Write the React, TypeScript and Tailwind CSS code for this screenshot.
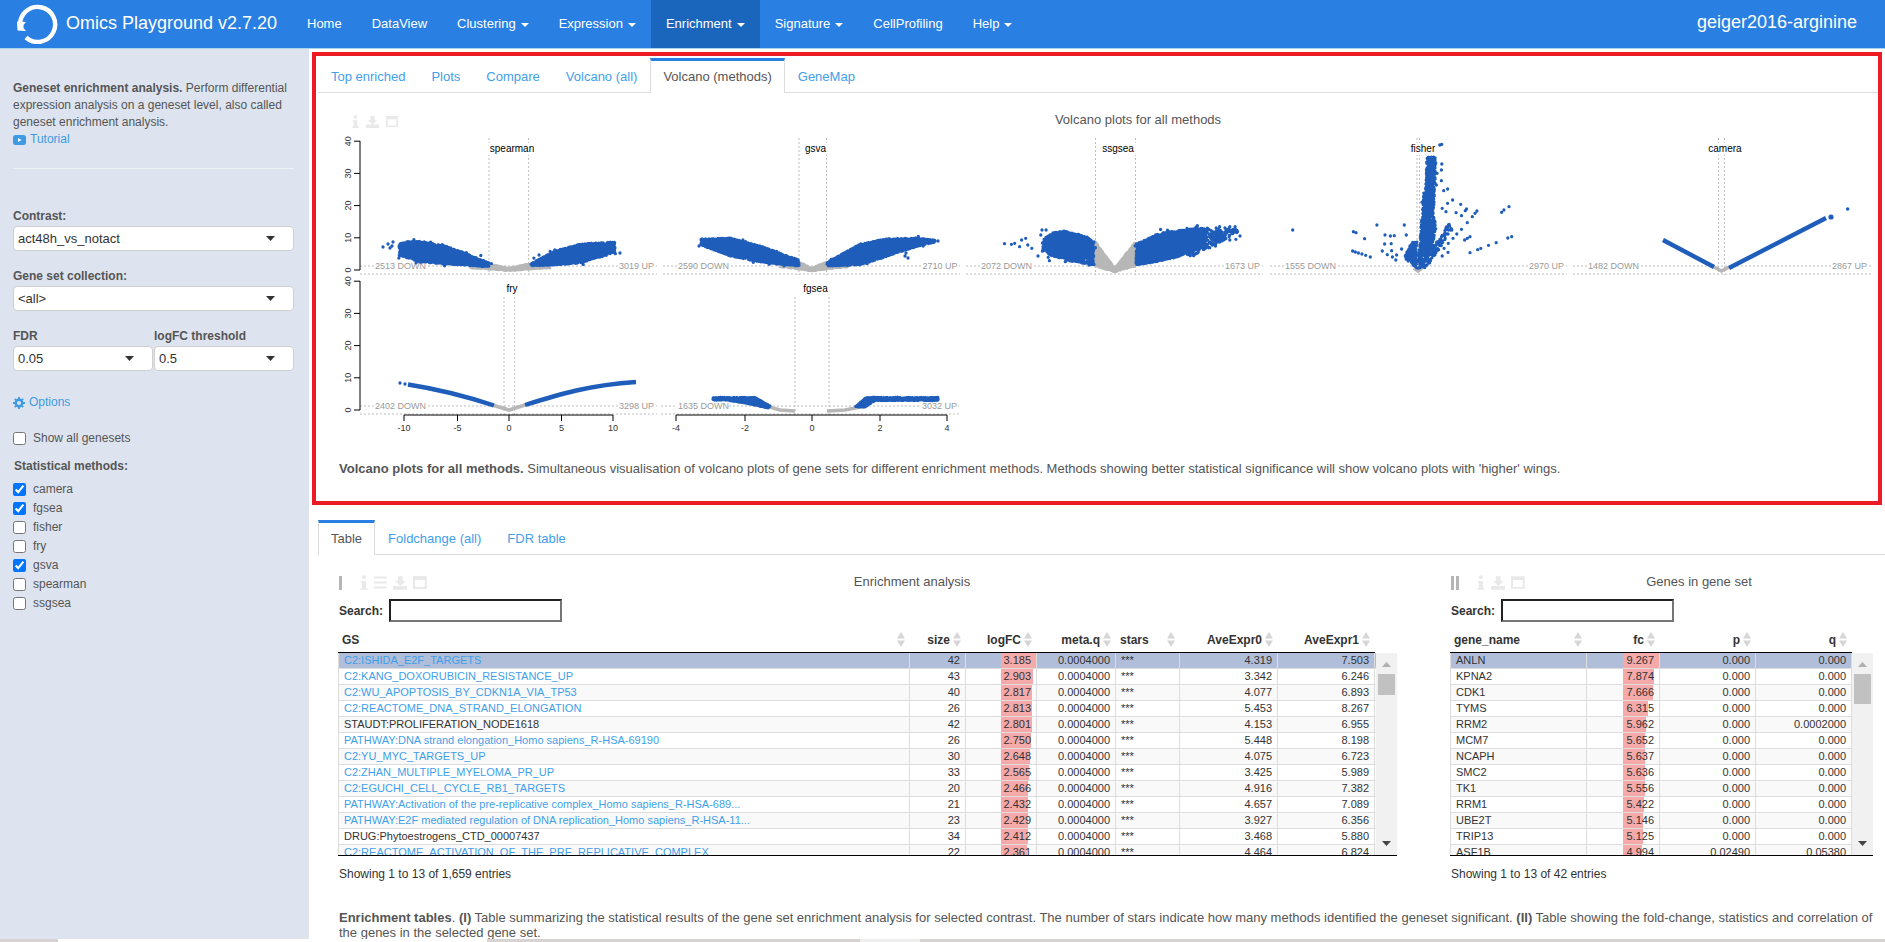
import React from "react";

type Pt = [number, number];

function rng(seed: number) {
  let a = seed;
  return () => {
    a |= 0;
    a = (a + 0x6d2b79f5) | 0;
    let t = Math.imul(a ^ (a >>> 15), 1 | a);
    t = (t + Math.imul(t ^ (t >>> 7), 61 | t)) ^ t;
    return ((t ^ (t >>> 14)) >>> 0) / 4294967296;
  };
}

function inside(p: Pt, poly: Pt[]) {
  let c = false;
  for (let i = 0, j = poly.length - 1; i < poly.length; j = i++) {
    const [xi, yi] = poly[i];
    const [xj, yj] = poly[j];
    if (yi > p[1] !== yj > p[1] && p[0] < ((xj - xi) * (p[1] - yi)) / (yj - yi) + xi) c = !c;
  }
  return c;
}

function area(poly: Pt[]) {
  let s = 0;
  for (let i = 0, j = poly.length - 1; i < poly.length; j = i++) s += poly[j][0] * poly[i][1] - poly[i][0] * poly[j][1];
  return Math.abs(s / 2);
}

function cloud(poly: Pt[], density: number, seed: number, rough = 0) {
  const r = rng(seed);
  const xs = poly.map((p) => p[0]);
  const ys = poly.map((p) => p[1]);
  const x0 = Math.min(...xs);
  const x1 = Math.max(...xs);
  const y0 = Math.min(...ys);
  const y1 = Math.max(...ys);
  const n = Math.ceil(area(poly) * density);
  let d = "";
  let k = 0;
  let guard = 0;
  while (k < n && guard < n * 60) {
    guard++;
    const p: Pt = [x0 + r() * (x1 - x0), y0 + r() * (y1 - y0)];
    if (inside(p, poly)) {
      // a few points stray past the outline so the edge of a cloud is rough
      const stray = r() < 0.04 ? rough : 0;
      const qx = p[0] + (r() - 0.5) * stray;
      const qy = p[1] + (r() - 0.5) * stray;
      d += `M${qx.toFixed(1)} ${qy.toFixed(1)}h0`;
      k++;
    }
  }
  return d;
}

const dots = (pts: Pt[]) => pts.map((p) => `M${p[0]} ${p[1]}h0`).join("");
const z2 = (pts: Pt[]): Pt[] => pts.map(([x, y]) => [+(640 + x / 2.45).toFixed(1), +(y / 3).toFixed(1)]);
const z3 = (pts: Pt[]): Pt[] => pts.map(([x, y]) => [+(1280 + x / 2.59).toFixed(1), +(y / 3).toFixed(1)]);

const BLUE = "#1f5dba";
const GRAY = "#b7b7b7";

const blueD =
  // spearman
  cloud([[399, 244], [405, 242], [420, 241], [445, 246], [465, 253], [489, 263], [489, 267], [465, 265], [445, 264], [420, 262], [399, 255]], 1.6, 1, 7) +
  dots([[383, 247], [388, 244], [392, 246], [390, 248], [393, 242]]) +
  cloud([[530, 264], [555, 251], [580, 244], [615, 242], [615, 252], [580, 263], [555, 265], [530, 266]], 1.6, 2, 7) +
  dots([[620, 253], [539, 255]]) +
  // gsva
  cloud([[701, 239], [730, 238], [760, 246], [799, 260], [799, 266], [760, 262], [730, 256], [701, 245]], 1.6, 3, 5) +
  cloud([[826, 263], [860, 244], [885, 239], [915, 238], [935, 240], [935, 242], [915, 247], [885, 257], [860, 265], [826, 266]], 1.6, 4, 6) +
  dots([[905, 256], [908, 258], [906, 253], [699, 246], [938, 241]]) +
  // ssgsea
  cloud([[1042, 241], [1052, 233], [1064, 231], [1085, 236], [1094, 241], [1094, 265], [1070, 261], [1050, 255], [1042, 249]], 1, 5, 9) +
  cloud([[1136, 244], [1160, 233], [1190, 229], [1205, 228], [1205, 244], [1190, 254], [1160, 261], [1136, 265]], 1.2, 6, 9) +
  cloud([[1190, 240], [1205, 228], [1235, 227], [1238, 232], [1215, 245], [1190, 258]], 0.3, 7, 6) +
  dots(
    z2([[893, 731], [910, 733], [918, 730], [935, 720], [945, 715], [930, 740], [950, 735], [960, 745], [985, 690], [995, 690], [982, 705], [975, 768], [1000, 772], [1003, 782], [1042, 785], [1100, 795],
      [1420, 680], [1445, 680], [1458, 680], [1455, 690], [1470, 708], [1460, 718], [1445, 720], [1425, 708], [1410, 715], [1410, 738], [1390, 735], [1370, 745], [1345, 740], [1320, 750], [1300, 755], [1280, 765], [1260, 775], [1240, 785]])
  ) +
  // fisher
  cloud([[1427, 157], [1436, 157], [1435, 190], [1425, 190]], 0.75, 81, 3) +
  cloud([[1418, 270], [1420, 240], [1424, 190], [1435, 190], [1433, 215], [1436, 225], [1433, 245], [1425, 262]], 0.85, 8, 5) +
  cloud([[1420, 268], [1437, 240], [1450, 222], [1452, 228], [1440, 248], [1426, 268]], 0.3, 88) +
  cloud([[1417, 269], [1417, 241], [1412, 242], [1408, 250], [1404, 257], [1411, 264]], 0.6, 9, 3) +
  dots(
    z3([[419, 492], [418, 510], [418, 542], [407, 520], [405, 555], [424, 572], [434, 567], [447, 600], [434, 610], [420, 625], [430, 635], [468, 613], [483, 627], [480, 632], [456, 638], [470, 647], [510, 633], [505, 640], [498, 650], [593, 620], [580, 630], [574, 637], [485, 668], [470, 688], [445, 690], [432, 688], [600, 710], [590, 714], [492, 710], [485, 715], [478, 720], [560, 728], [540, 736], [520, 745], [512, 749], [492, 758], [435, 757], [420, 768], [458, 702], [448, 715], [436, 730], [425, 745],
      [33, 690], [190, 695], [197, 698], [219, 716], [251, 675], [322, 675], [272, 705], [286, 708], [296, 707], [327, 705], [271, 732], [288, 731], [289, 752], [265, 753], [278, 764], [291, 771], [300, 780], [302, 765], [188, 753], [195, 756], [203, 759], [212, 762], [222, 766], [234, 771], [315, 747]])
  ) +
  // fry dots
  dots([[400, 383], [405, 384]]) +
  // fgsea
  cloud([[713, 397.5], [755, 397.5], [770, 406], [768, 408], [745, 403], [725, 400], [713, 400]], 3, 10) +
  cloud([[855, 407], [862, 401], [866, 397.5], [938, 397.5], [938, 400.5], [875, 400.5], [865, 407]], 3, 11) +
  dots([[713, 399], [937, 399]]);

const grayD =
  cloud([[470, 265], [489, 264], [509, 268], [528, 264], [550, 266], [550, 268], [528, 269], [509, 271], [489, 269], [470, 268]], 2.5, 12) +
  cloud([[780, 265], [799, 262], [812, 268], [826, 262], [848, 265], [848, 267], [826, 269], [812, 271], [799, 269], [780, 267]], 2.5, 13) +
  cloud([[1095, 241], [1105, 255], [1115, 268], [1125, 255], [1135, 242], [1135, 266], [1115, 272], [1095, 266]], 3, 14);

const lines: { d: string; c: string }[] = [
  { d: "M1663 240L1714 267", c: BLUE },
  { d: "M1729 268L1826 218", c: BLUE },
  { d: "M1714 267L1721.5 271L1729 267", c: GRAY },
  { d: "M1414 268L1418 271L1422 268", c: GRAY },
  { d: "M408 384.5Q450 391 494 405.5", c: BLUE },
  { d: "M525 405C560 394 590 385 636 382", c: BLUE },
  { d: "M494 405.5L509 410L525 405", c: GRAY },
  { d: "M762 405L780 410L795 411", c: GRAY },
  { d: "M827 411L845 410L860 407", c: GRAY },
];

type Panel = { x0: number; x1: number; v1: number; v2: number; t: string; tx: number; dl: string; dx: number; ul: string; ux: number };
const row1: Panel[] = [
  { x0: 360, x1: 657, v1: 489, v2: 528.6, t: "spearman", tx: 512, dl: "2513 DOWN", dx: 375, ul: "3019 UP", ux: 654 },
  { x0: 663, x1: 960, v1: 799, v2: 826.5, t: "gsva", tx: 815.5, dl: "2590 DOWN", dx: 678, ul: "2710 UP", ux: 957.5 },
  { x0: 966, x1: 1263, v1: 1095.5, v2: 1135.5, t: "ssgsea", tx: 1118, dl: "2072 DOWN", dx: 981, ul: "1673 UP", ux: 1260 },
  { x0: 1270, x1: 1567, v1: 1417, v2: 1419.5, t: "fisher", tx: 1423, dl: "1555 DOWN", dx: 1285, ul: "2970 UP", ux: 1564 },
  { x0: 1573, x1: 1872, v1: 1718.6, v2: 1724.4, t: "camera", tx: 1725, dl: "1482 DOWN", dx: 1588, ul: "2867 UP", ux: 1867 },
];
const row2: Panel[] = [
  { x0: 360, x1: 657, v1: 504, v2: 514.6, t: "fry", tx: 512, dl: "2402 DOWN", dx: 375, ul: "3298 UP", ux: 654 },
  { x0: 661, x1: 960, v1: 795, v2: 829, t: "fgsea", tx: 815.5, dl: "1635 DOWN", dx: 678, ul: "3032 UP", ux: 957 },
];

function PanelMarks({ p, top, zero }: { p: Panel; top: number; zero: number }) {
  const dash = { stroke: "#bdbdbd", strokeWidth: 1, strokeDasharray: "2 2", fill: "none" };
  return (
    <g>
      <line x1={p.x0} x2={p.x1} y1={zero - 4} y2={zero - 4} {...dash} />
      <line x1={p.x0} x2={p.x1} y1={zero + 4} y2={zero + 4} {...dash} />
      <line x1={p.v1} x2={p.v1} y1={top} y2={zero + 5} {...dash} />
      <line x1={p.v2} x2={p.v2} y1={top} y2={zero + 5} {...dash} />
      <rect x={p.dx - 1} y={zero - 9} width={52} height={10} fill="#fff" />
      <text x={p.dx} y={zero - 1} fontSize={9} fill="#9a9a9a">{p.dl}</text>
      <rect x={p.ux - 36} y={zero - 9} width={37} height={10} fill="#fff" />
      <text x={p.ux} y={zero - 1} fontSize={9} fill="#9a9a9a" textAnchor="end">{p.ul}</text>
    </g>
  );
}

function YAxis({ zero }: { zero: number }) {
  return (
    <g>
      <path d={`M360 ${zero - 129}V${zero}`} stroke="#000" fill="none" />
      {[0, 10, 20, 30, 40].map((v, i) => {
        const y = zero - i * 32.2;
        return (
          <g key={v}>
            <line x1={354} x2={360} y1={y} y2={y} stroke="#000" />
            <text x={351} y={y} fontSize={9} fill="#333" textAnchor="middle" transform={`rotate(-90 351 ${y})`}>{v}</text>
          </g>
        );
      })}
    </g>
  );
}

function XAxis({ ticks }: { ticks: [number, string][] }) {
  return (
    <g>
      <path d={`M${ticks[0][0]} 415H${ticks[ticks.length - 1][0]}`} stroke="#000" fill="none" />
      {ticks.map(([x, l]) => (
        <g key={l}>
          <line x1={x} x2={x} y1={415} y2={421} stroke="#000" />
          <text x={x} y={431} fontSize={9} fill="#333" textAnchor="middle">{l}</text>
        </g>
      ))}
    </g>
  );
}

function VolcanoPlots() {
  return (
    <svg width={1560} height={308} viewBox="318 132 1560 308" className="block">
      <rect x={318} y={132} width={1560} height={308} fill="#fff" />
      {row1.map((p) => <PanelMarks key={p.t} p={p} top={138} zero={270} />)}
      {row2.map((p) => <PanelMarks key={p.t} p={p} top={297} zero={410} />)}
      <YAxis zero={270} />
      <YAxis zero={410} />
      <XAxis ticks={[[404, "-10"], [457.5, "-5"], [509, "0"], [561.5, "5"], [613, "10"]]} />
      <XAxis ticks={[[676, "-4"], [745, "-2"], [812, "0"], [880, "2"], [947, "4"]]} />
      <path d={grayD} stroke={GRAY} strokeWidth={3} strokeLinecap="round" fill="none" />
      {lines.filter((l) => l.c === GRAY).map((l, i) => <path key={i} d={l.d} stroke={l.c} strokeWidth={3.6} fill="none" />)}
      <path d={blueD} stroke={BLUE} strokeWidth={3.3} strokeLinecap="round" fill="none" />
      {lines.filter((l) => l.c === BLUE).map((l, i) => <path key={i} d={l.d} stroke={l.c} strokeWidth={4.4} strokeLinejoin="round" fill="none" />)}
      <circle cx={1831} cy={217} r={2.6} fill={BLUE} />
      <circle cx={1847.6} cy={209} r={1.8} fill={BLUE} />
      {[...row1.map((p) => ({ p, y: 152 })), ...row2.map((p) => ({ p, y: 292 }))].map(({ p, y }) => (
        <g key={p.t}>
          <rect x={p.tx - p.t.length * 3} y={y - 9} width={p.t.length * 6} height={12} fill="#fff" />
          <text x={p.tx} y={y} fontSize={10} fill="#000" textAnchor="middle">{p.t}</text>
        </g>
      ))}
      <path d={dots(z3([[419, 433], [414, 435]]))} stroke={BLUE} strokeWidth={3.3} strokeLinecap="round" fill="none" />
    </svg>
  );
}

const G = "#e9e9e9";
const InfoIcon = () => (
  <svg width="8" height="15" viewBox="0 0 8 15" className="block"><circle cx="4" cy="2.2" r="2" fill={G} /><path d="M1 6h5v7h1.5v2H.5v-2H2V8H1z" fill={G} /></svg>
);
const ListIcon = () => (
  <svg width="13" height="13" viewBox="0 0 13 13" className="block"><path d="M0 1.5h13M0 6.5h13M0 11.5h13" stroke={G} strokeWidth="2" /></svg>
);
const DownIcon = () => (
  <svg width="15" height="14" viewBox="0 0 15 14" className="block"><path d="M5 0h5v5h3L7.5 10 2 5h3z M0 10h15v4H0z" fill={G} /></svg>
);
const WinIcon = () => (
  <svg width="14" height="13" viewBox="0 0 14 13" className="block"><path d="M0 0h14v13H0z M2 4v7h10V4z" fill={G} fillRule="evenodd" /></svg>
);

const Caret = ({ c = "#333" }: { c?: string }) => (
  <svg width="9" height="5" viewBox="0 0 9 5" className="block shrink-0"><path d="M0 0h9L4.5 5z" fill={c} /></svg>
);

const NavItem = ({ t, caret, active }: { t: string; caret?: boolean; active?: boolean }) => (
  <div className={`flex h-[48px] items-center gap-[5px] px-[15px] text-[13px] text-white ${active ? "bg-[#1b66bd]" : ""}`}>
    <span>{t}</span>
    {caret && <svg width="8" height="4" viewBox="0 0 8 4" className="mt-[2px] block"><path d="M0 0h8L4 4z" fill="#fff" /></svg>}
  </div>
);

const Logo = () => (
  <svg width="42" height="42" viewBox="0 0 42 42" className="block shrink-0">
    <path d="M4.2 24A17.5 17.5 0 1 1 10 35.5" stroke="#fff" strokeWidth="4.4" fill="none" />
    <path d="M10 35.5Q16 40.5 23 40" stroke="#fff" strokeWidth="2" fill="none" />
    <path d="M1 19.5l.5 9 8.5 .5 -2.5 -3 0 -3 2.5 -3z" fill="#fff" />
  </svg>
);

const Select = ({ v, cls }: { v: string; cls: string }) => (
  <div className={`flex h-[25px] items-center justify-between rounded-[4px] border border-[#cfcfcf] bg-white pl-[4px] pr-[18px] text-[13px] text-[#333] ${cls}`}>
    <span>{v}</span>
    <Caret />
  </div>
);

const Check = ({ label, on }: { label: string; on?: boolean }) => (
  <label className="flex h-[19px] items-center gap-[7px] text-[12px] text-[#555]">
    <input type="checkbox" defaultChecked={on} className="m-0 h-[13px] w-[13px]" />
    <span>{label}</span>
  </label>
);

function Sidebar() {
  return (
    <aside className="flex w-[309px] shrink-0 flex-col bg-[#dde4ef] pl-[13px] pr-[15px] text-[12px] leading-[17px] text-[#555]">
      <p className="mt-[31px]">
        <b>Geneset enrichment analysis.</b> Perform differential expression analysis on a geneset level, also called geneset enrichment analysis.
      </p>
      <div className="flex items-center gap-[4px] text-[#3d9be5]">
        <svg width="13" height="10" viewBox="0 0 13 10" className="block"><rect width="13" height="10" rx="2.5" fill="#3d9be5" /><path d="M5 3l3.5 2L5 7z" fill="#fff" /></svg>
        <span>Tutorial</span>
      </div>
      <div className="mt-[20px] h-px w-[281px] bg-[#eef1f6]" />
      <div className="mt-[39px] font-bold">Contrast:</div>
      <Select v="act48h_vs_notact" cls="mt-[1px] w-[281px]" />
      <div className="mt-[17px] font-bold">Gene set collection:</div>
      <Select v="<all>" cls="mt-[1px] w-[281px]" />
      <div className="mt-[17px] flex">
        <div className="w-[141px] font-bold">FDR</div>
        <div className="font-bold">logFC threshold</div>
      </div>
      <div className="mt-[1px] flex gap-[1px]">
        <Select v="0.05" cls="w-[140px]" />
        <Select v="0.5" cls="w-[140px]" />
      </div>
      <div className="mt-[23px] flex items-center gap-[4px] text-[#3d9be5]">
        <svg width="12" height="12" viewBox="0 0 12 12" className="block">
          <circle cx="6" cy="6" r="3.3" fill="none" stroke="#3d9be5" strokeWidth="2.4" />
          <path d="M6 0v12M0 6h12M1.8 1.8l8.4 8.4M10.2 1.8l-8.4 8.4" stroke="#3d9be5" strokeWidth="1.8" strokeDasharray="2 8" />
        </svg>
        <span>Options</span>
      </div>
      <div className="mt-[18px]"><Check label="Show all genesets" /></div>
      <div className="mt-[10px] pl-px font-bold">Statistical methods:</div>
      <div className="mt-[5px]">
        <Check label="camera" on />
        <Check label="fgsea" on />
        <Check label="fisher" />
        <Check label="fry" />
        <Check label="gsva" on />
        <Check label="spearman" />
        <Check label="ssgsea" />
      </div>
    </aside>
  );
}

function Tabs({ items, active }: { items: string[]; active: string }) {
  return (
    <div className="flex h-[35px] items-stretch border-b border-[#ddd]">
      {items.map((t) =>
        t === active ? (
          <div key={t} className="-mb-px flex h-[35px] items-center border-x border-[#ddd] border-t-[3px] border-t-[#2a7fe2] bg-white px-[12px] text-[13px] text-[#555]">{t}</div>
        ) : (
          <div key={t} className="flex items-center px-[13px] pt-[3px] text-[13px] text-[#42a0ea]">{t}</div>
        )
      )}
    </div>
  );
}

const Sort = () => (
  <svg width="8" height="15" viewBox="0 0 8 15" className="block shrink-0"><path d="M0 6.5L4 0l4 6.5zM0 8.5h8L4 15z" fill="#d6d6d6" /></svg>
);

type Col = { h: string; w: number; align: "l" | "r" };

function Head({ cols }: { cols: Col[] }) {
  return (
    <div className="flex h-[26px] border-b border-black text-[12px] font-bold text-[#333]">
      {cols.map((c) => (
        <div key={c.h} style={{ width: c.w }} className={`flex items-center gap-[3px] pl-[4px] pr-[5px] ${c.align === "r" ? "justify-end" : "justify-between"}`}>
          <span>{c.h}</span>
          <Sort />
        </div>
      ))}
    </div>
  );
}

function Scrollbar({ thumb }: { thumb: number }) {
  return (
    <div className="flex w-[21px] shrink-0 flex-col items-center bg-[#f1f1f1]">
      <svg width="9" height="5" viewBox="0 0 9 5" className="mt-[9px] block"><path d="M0 5h9L4.5 0z" fill="#b0b0b0" /></svg>
      <div style={{ height: thumb }} className="mt-[7px] w-[17px] bg-[#c1c1c1]" />
      <div className="flex-1" />
      <div className="mb-[9px]"><Caret c="#444" /></div>
    </div>
  );
}

type Cell = { t: string; bar?: number; cls?: string; link?: boolean };

function DataTable({ cols, rows, thumb, barStart }: { cols: Col[]; rows: Cell[][]; thumb: number; barStart: number }) {
  return (
    <div className="flex h-[203px] overflow-hidden border-b border-black">
      <div className="flex-1 overflow-hidden">
        {rows.map((r, i) => (
          <div key={i} className={`flex h-[16px] border-b border-[#ddd] leading-[15px] ${i === 0 ? "bg-[#b0bed9]" : i % 2 === 0 ? "bg-[#f9f9f9]" : "bg-white"}`}>
            {r.map((c, j) => (
              <div
                key={j}
                style={{
                  width: cols[j].w,
                  background: c.bar !== undefined ? `linear-gradient(90deg, transparent ${barStart}px, #f5a9a9 ${barStart}px, #f5a9a9 ${barStart + c.bar}px, transparent ${barStart + c.bar}px)` : undefined,
                }}
                className={`overflow-hidden whitespace-nowrap border-r border-[#ddd] px-[5px] text-[11px] first:border-l ${cols[j].align === "r" ? "text-right" : "text-left"} ${c.link ? "text-[#3f9fea]" : "text-[#333]"} ${c.cls ?? ""}`}
              >
                {c.t}
              </div>
            ))}
          </div>
        ))}
      </div>
      <Scrollbar thumb={thumb} />
    </div>
  );
}

const leftCols: Col[] = [
  { h: "GS", w: 572, align: "l" },
  { h: "size", w: 56, align: "r" },
  { h: "logFC", w: 71, align: "r" },
  { h: "meta.q", w: 79, align: "r" },
  { h: "stars", w: 64, align: "l" },
  { h: "AveExpr0", w: 98, align: "r" },
  { h: "AveExpr1", w: 97, align: "r" },
];

const leftData: [string, boolean, string, number, string, string][] = [
  ["C2:ISHIDA_E2F_TARGETS", true, "42", 3.185, "4.319", "7.503"],
  ["C2:KANG_DOXORUBICIN_RESISTANCE_UP", true, "43", 2.903, "3.342", "6.246"],
  ["C2:WU_APOPTOSIS_BY_CDKN1A_VIA_TP53", true, "40", 2.817, "4.077", "6.893"],
  ["C2:REACTOME_DNA_STRAND_ELONGATION", true, "26", 2.813, "5.453", "8.267"],
  ["STAUDT:PROLIFERATION_NODE1618", false, "42", 2.801, "4.153", "6.955"],
  ["PATHWAY:DNA strand elongation_Homo sapiens_R-HSA-69190", true, "26", 2.75, "5.448", "8.198"],
  ["C2:YU_MYC_TARGETS_UP", true, "30", 2.648, "4.075", "6.723"],
  ["C2:ZHAN_MULTIPLE_MYELOMA_PR_UP", true, "33", 2.565, "3.425", "5.989"],
  ["C2:EGUCHI_CELL_CYCLE_RB1_TARGETS", true, "20", 2.466, "4.916", "7.382"],
  ["PATHWAY:Activation of the pre-replicative complex_Homo sapiens_R-HSA-689...", true, "21", 2.432, "4.657", "7.089"],
  ["PATHWAY:E2F mediated regulation of DNA replication_Homo sapiens_R-HSA-11...", true, "23", 2.429, "3.927", "6.356"],
  ["DRUG:Phytoestrogens_CTD_00007437", false, "34", 2.412, "3.468", "5.880"],
  ["C2:REACTOME_ACTIVATION_OF_THE_PRE_REPLICATIVE_COMPLEX", true, "22", 2.361, "4.464", "6.824"],
];

const leftRows: Cell[][] = leftData.map(([n, link, s, fc, e0, e1]) => [
  { t: n, link },
  { t: s },
  { t: fc.toFixed(3), bar: (fc / 3.185) * 35 },
  { t: "0.0004000" },
  { t: "***" },
  { t: e0 },
  { t: e1 },
]);

const rightCols: Col[] = [
  { h: "gene_name", w: 137, align: "l" },
  { h: "fc", w: 73, align: "r" },
  { h: "p", w: 96, align: "r" },
  { h: "q", w: 96, align: "r" },
];

const rightData: [string, number, string, string][] = [
  ["ANLN", 9.267, "0.000", "0.000"],
  ["KPNA2", 7.874, "0.000", "0.000"],
  ["CDK1", 7.666, "0.000", "0.000"],
  ["TYMS", 6.315, "0.000", "0.000"],
  ["RRM2", 5.962, "0.000", "0.0002000"],
  ["MCM7", 5.652, "0.000", "0.000"],
  ["NCAPH", 5.637, "0.000", "0.000"],
  ["SMC2", 5.636, "0.000", "0.000"],
  ["TK1", 5.556, "0.000", "0.000"],
  ["RRM1", 5.422, "0.000", "0.000"],
  ["UBE2T", 5.146, "0.000", "0.000"],
  ["TRIP13", 5.125, "0.000", "0.000"],
  ["ASF1B", 4.994, "0.02490", "0.05380"],
];

const rightRows: Cell[][] = rightData.map(([n, fc, p, q]) => [
  { t: n },
  { t: fc.toFixed(3), bar: (fc / 9.267) * 36 },
  { t: p },
  { t: q },
]);

const SearchRow = () => (
  <div className="mt-[4px] flex h-[23px] items-center gap-[6px] pl-px text-[12px] font-bold text-[#333]">
    <span>Search:</span>
    <input
      readOnly
      className="h-[23px] w-[173px] border-2 border-b-[#767676] border-l-[#222] border-r-[#767676] border-t-[#222] bg-white outline-none"
    />
  </div>
);

function App() {
  return (
    <div className="flex h-[942px] w-[1885px] flex-col overflow-hidden bg-white font-['Liberation_Sans',Arial,sans-serif]">
      <header className="flex h-[49px] shrink-0 items-start border-b border-b-[#a9d5ea] bg-[#2a7fe2]">
        <div className="ml-[16px] mt-[2px]"><Logo /></div>
        <div className="ml-[8px] mt-[13px] w-[211px] whitespace-nowrap text-[18px] leading-[20px] text-white">Omics Playground v2.7.20</div>
        <nav className="ml-[15px] flex">
          <NavItem t="Home" />
          <NavItem t="DataView" />
          <NavItem t="Clustering" caret />
          <NavItem t="Expression" caret />
          <NavItem t="Enrichment" caret active />
          <NavItem t="Signature" caret />
          <NavItem t="CellProfiling" />
          <NavItem t="Help" caret />
        </nav>
        <div className="ml-auto mr-[28px] mt-[12px] text-[18px] leading-[20px] text-white">geiger2016-arginine</div>
      </header>

      <div className="flex min-h-0 flex-1">
        <Sidebar />
        <main className="min-w-0 flex-1 pl-[3px]">
          <section className="mt-[3px] h-[453px] w-[1570px] border-4 border-[#ed1c24] pl-[2px] pt-[2px]">
            <Tabs items={["Top enriched", "Plots", "Compare", "Volcano (all)", "Volcano (methods)", "GeneMap"]} active="Volcano (methods)" />
            <div className="flex h-[39px] items-center">
              <div className="flex w-[80px] items-center gap-[7px] pl-[34px] pt-[18px]">
                <InfoIcon />
                <DownIcon />
                <WinIcon />
              </div>
              <div className="flex-1 pt-[15px] text-center text-[13px] text-[#555]">Volcano plots for all methods</div>
            </div>
            <VolcanoPlots />
            <p className="ml-[21px] mt-[21px] text-[13px] leading-[16px] text-[#555]">
              <b>Volcano plots for all methods.</b> Simultaneous visualisation of volcano plots of gene sets for different enrichment methods. Methods showing better statistical significance will show volcano plots with 'higher' wings.
            </p>
          </section>

          <div className="ml-[6px] mt-[15px]">
            <Tabs items={["Table", "Foldchange (all)", "FDR table"]} active="Table" />
          </div>

          <div className="ml-[26px] mt-[12px] flex gap-[53px]">
            <div className="w-[1059px]">
              <div className="flex h-[28px] items-center">
                <div className="flex w-[89px] items-center gap-[6px] pl-px pt-[3px]">
                  <div className="mr-[12px] h-[14px] w-[3px] bg-[#b5b5b5]" />
                  <InfoIcon />
                  <ListIcon />
                  <DownIcon />
                  <WinIcon />
                </div>
                <div className="flex-1 pt-[2px] text-center text-[13px] text-[#555]">Enrichment analysis</div>
              </div>
              <SearchRow />
              <div className="mt-[5px]">
                <div className="w-[1037px]"><Head cols={leftCols} /></div>
                <DataTable cols={leftCols} rows={leftRows} thumb={21} barStart={35} />
              </div>
              <div className="mt-[11px] pl-px text-[12px] leading-[15px] text-[#333]">Showing 1 to 13 of 1,659 entries</div>
            </div>
            <div className="w-[423px]">
              <div className="flex h-[28px] items-center">
                <div className="flex w-[75px] items-center gap-[6px] pl-px pt-[3px]">
                  <div className="mr-[12px] flex h-[14px] w-[8px] justify-between">
                    <div className="w-[3px] bg-[#b5b5b5]" />
                    <div className="w-[3px] bg-[#b5b5b5]" />
                  </div>
                  <InfoIcon />
                  <DownIcon />
                  <WinIcon />
                </div>
                <div className="flex-1 pt-[2px] text-center text-[13px] text-[#555]">Genes in gene set</div>
              </div>
              <SearchRow />
              <div className="mt-[5px]">
                <div className="w-[402px]"><Head cols={rightCols} /></div>
                <DataTable cols={rightCols} rows={rightRows} thumb={30} barStart={36} />
              </div>
              <div className="mt-[11px] pl-px text-[12px] leading-[15px] text-[#333]">Showing 1 to 13 of 42 entries</div>
            </div>
          </div>

          <p className="ml-[27px] mt-[29px] w-[1540px] text-[13px] leading-[14.5px] text-[#555]">
            <b>Enrichment tables</b>. <b>(I)</b> Table summarizing the statistical results of the gene set enrichment analysis for selected contrast. The number of stars indicate how many methods identified the geneset significant. <b>(II)</b> Table showing the fold-change, statistics and correlation of the genes in the selected gene set.
          </p>
        </main>
      </div>

      <footer className="flex h-[3px] shrink-0 bg-[#d8d3d3]">
        <div className="w-[58px]" />
        <div className="w-[429px] bg-white" />
        <div className="w-[373px]" />
        <div className="w-[60px] bg-[#eeeeee]" />
      </footer>
    </div>
  );
}

export default App;
